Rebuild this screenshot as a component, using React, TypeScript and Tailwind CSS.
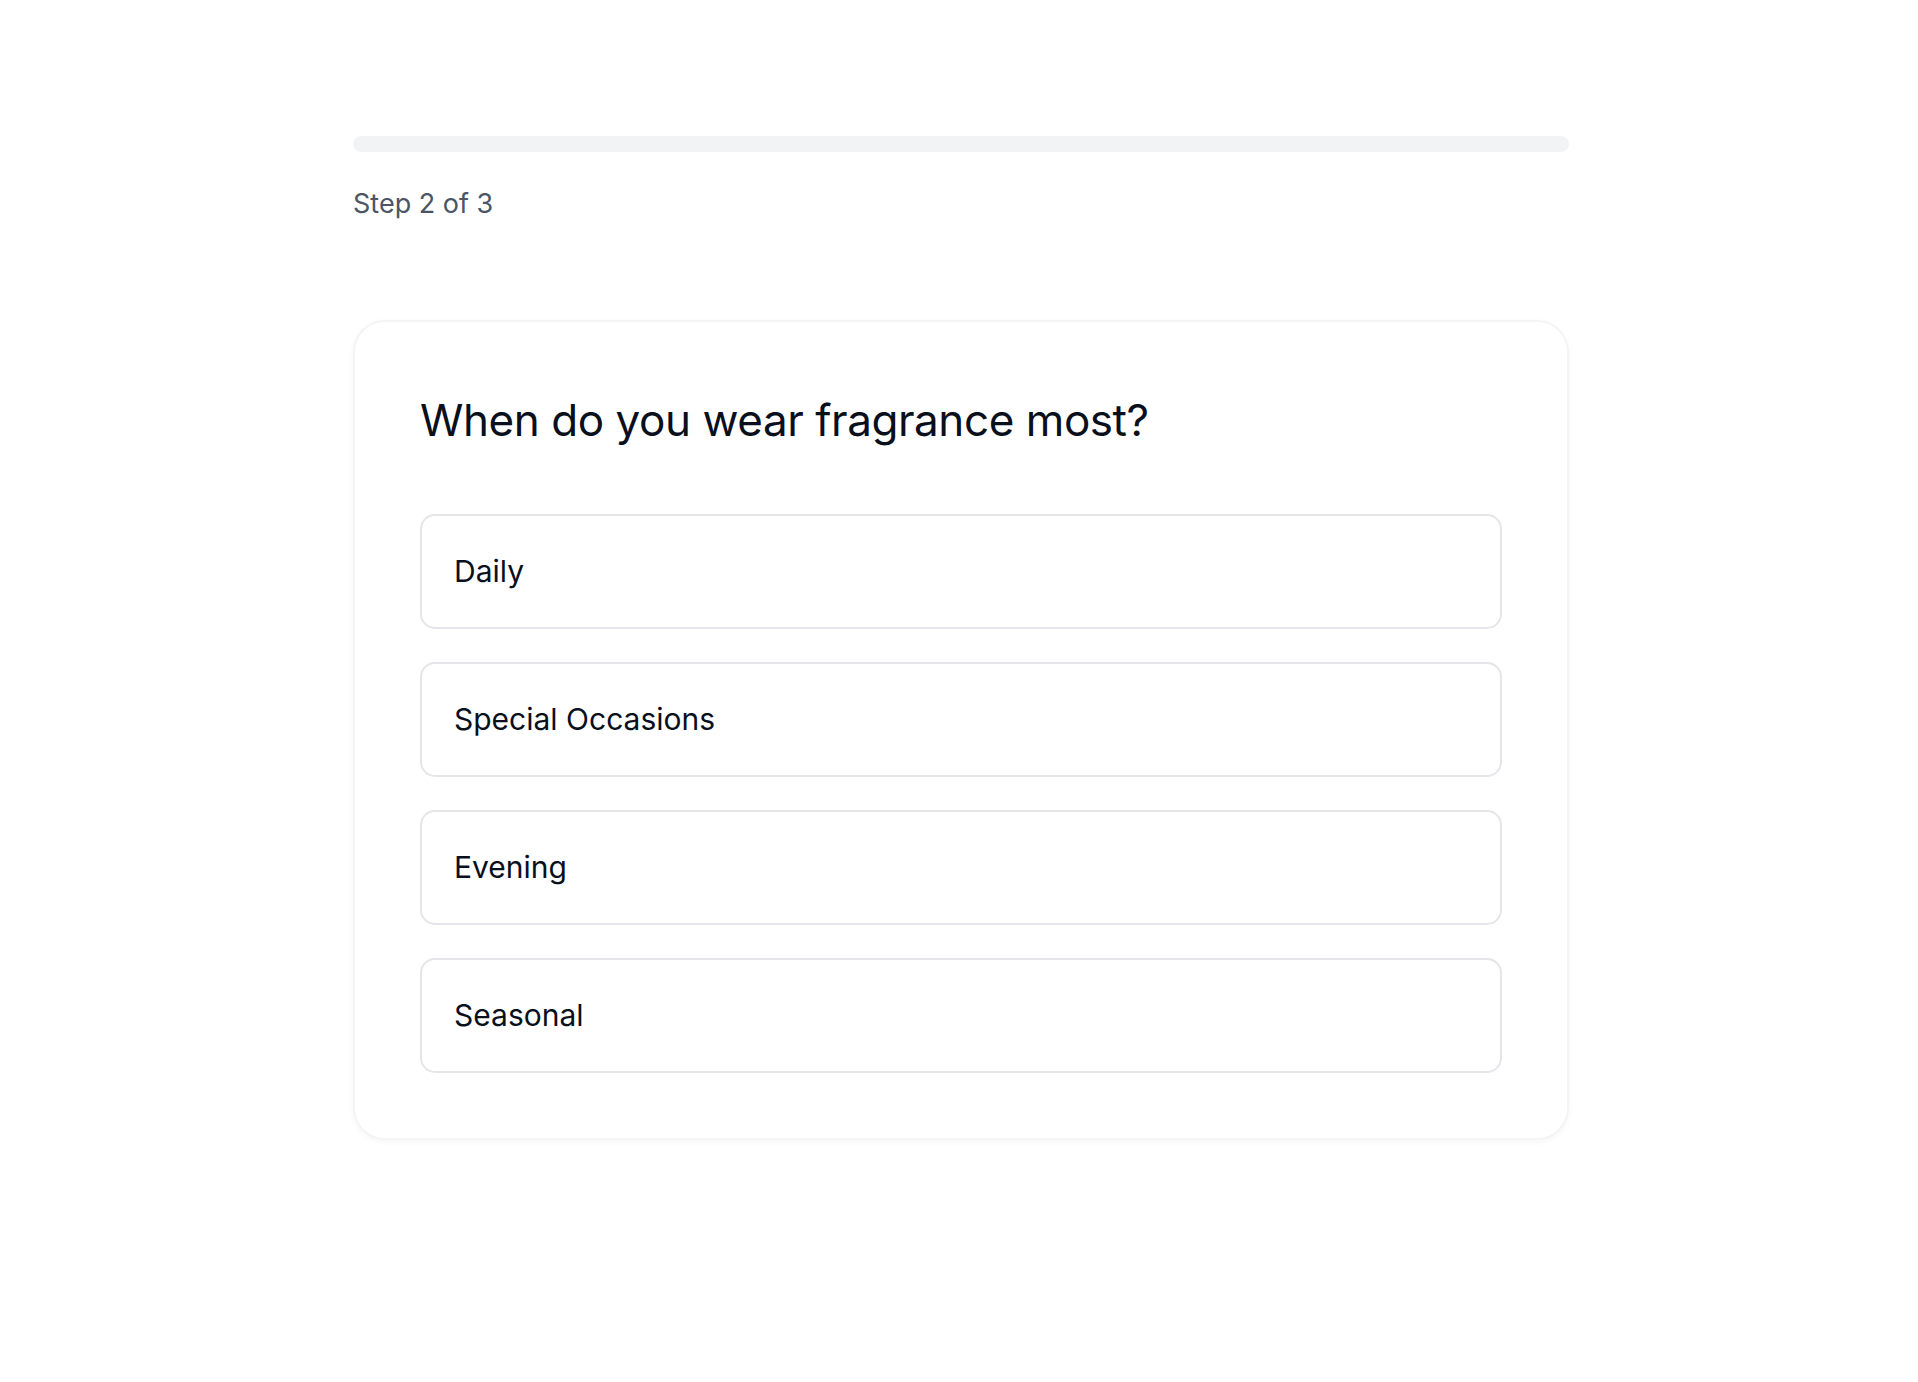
const OPTIONS = ["Daily", "Special Occasions", "Evening", "Seasonal"];

export default function App() {
  const step = 2;
  const total = 3;

  return (
    <div
      className="min-h-screen bg-white pl-[4px] pt-[136px]"
      style={{ fontFamily: "Inter, 'Noto Sans', sans-serif" }}
    >
      <div className="mx-auto w-[1216px]">
        <div className="h-4 w-full rounded-full bg-[#f2f3f5]" />
        <p className="mt-[34px] text-[27px] leading-[36px] text-[#4b5563]">
          Step {step} of {total}
        </p>

        <div className="mt-[98px] rounded-[32px] border-2 border-[#f3f4f6] bg-white px-[65px] pb-[65px] pt-[70px] shadow-[0_2px_6px_rgba(0,0,0,0.04)]">
          <h2 className="text-[44px] font-normal leading-[56px] tracking-[-0.01em] text-[#0a0f1c]">
            When do you wear fragrance most?
          </h2>

          <div className="mt-[66px] flex flex-col gap-[33px]">
            {OPTIONS.map((opt) => (
              <button
                key={opt}
                className="flex h-[115px] w-full items-center rounded-[15px] border-2 border-[#e5e5ea] bg-white px-[32px] text-left text-[30px] text-[#0a0f1c]"
              >
                {opt}
              </button>
            ))}
          </div>
        </div>
      </div>
    </div>
  );
}
